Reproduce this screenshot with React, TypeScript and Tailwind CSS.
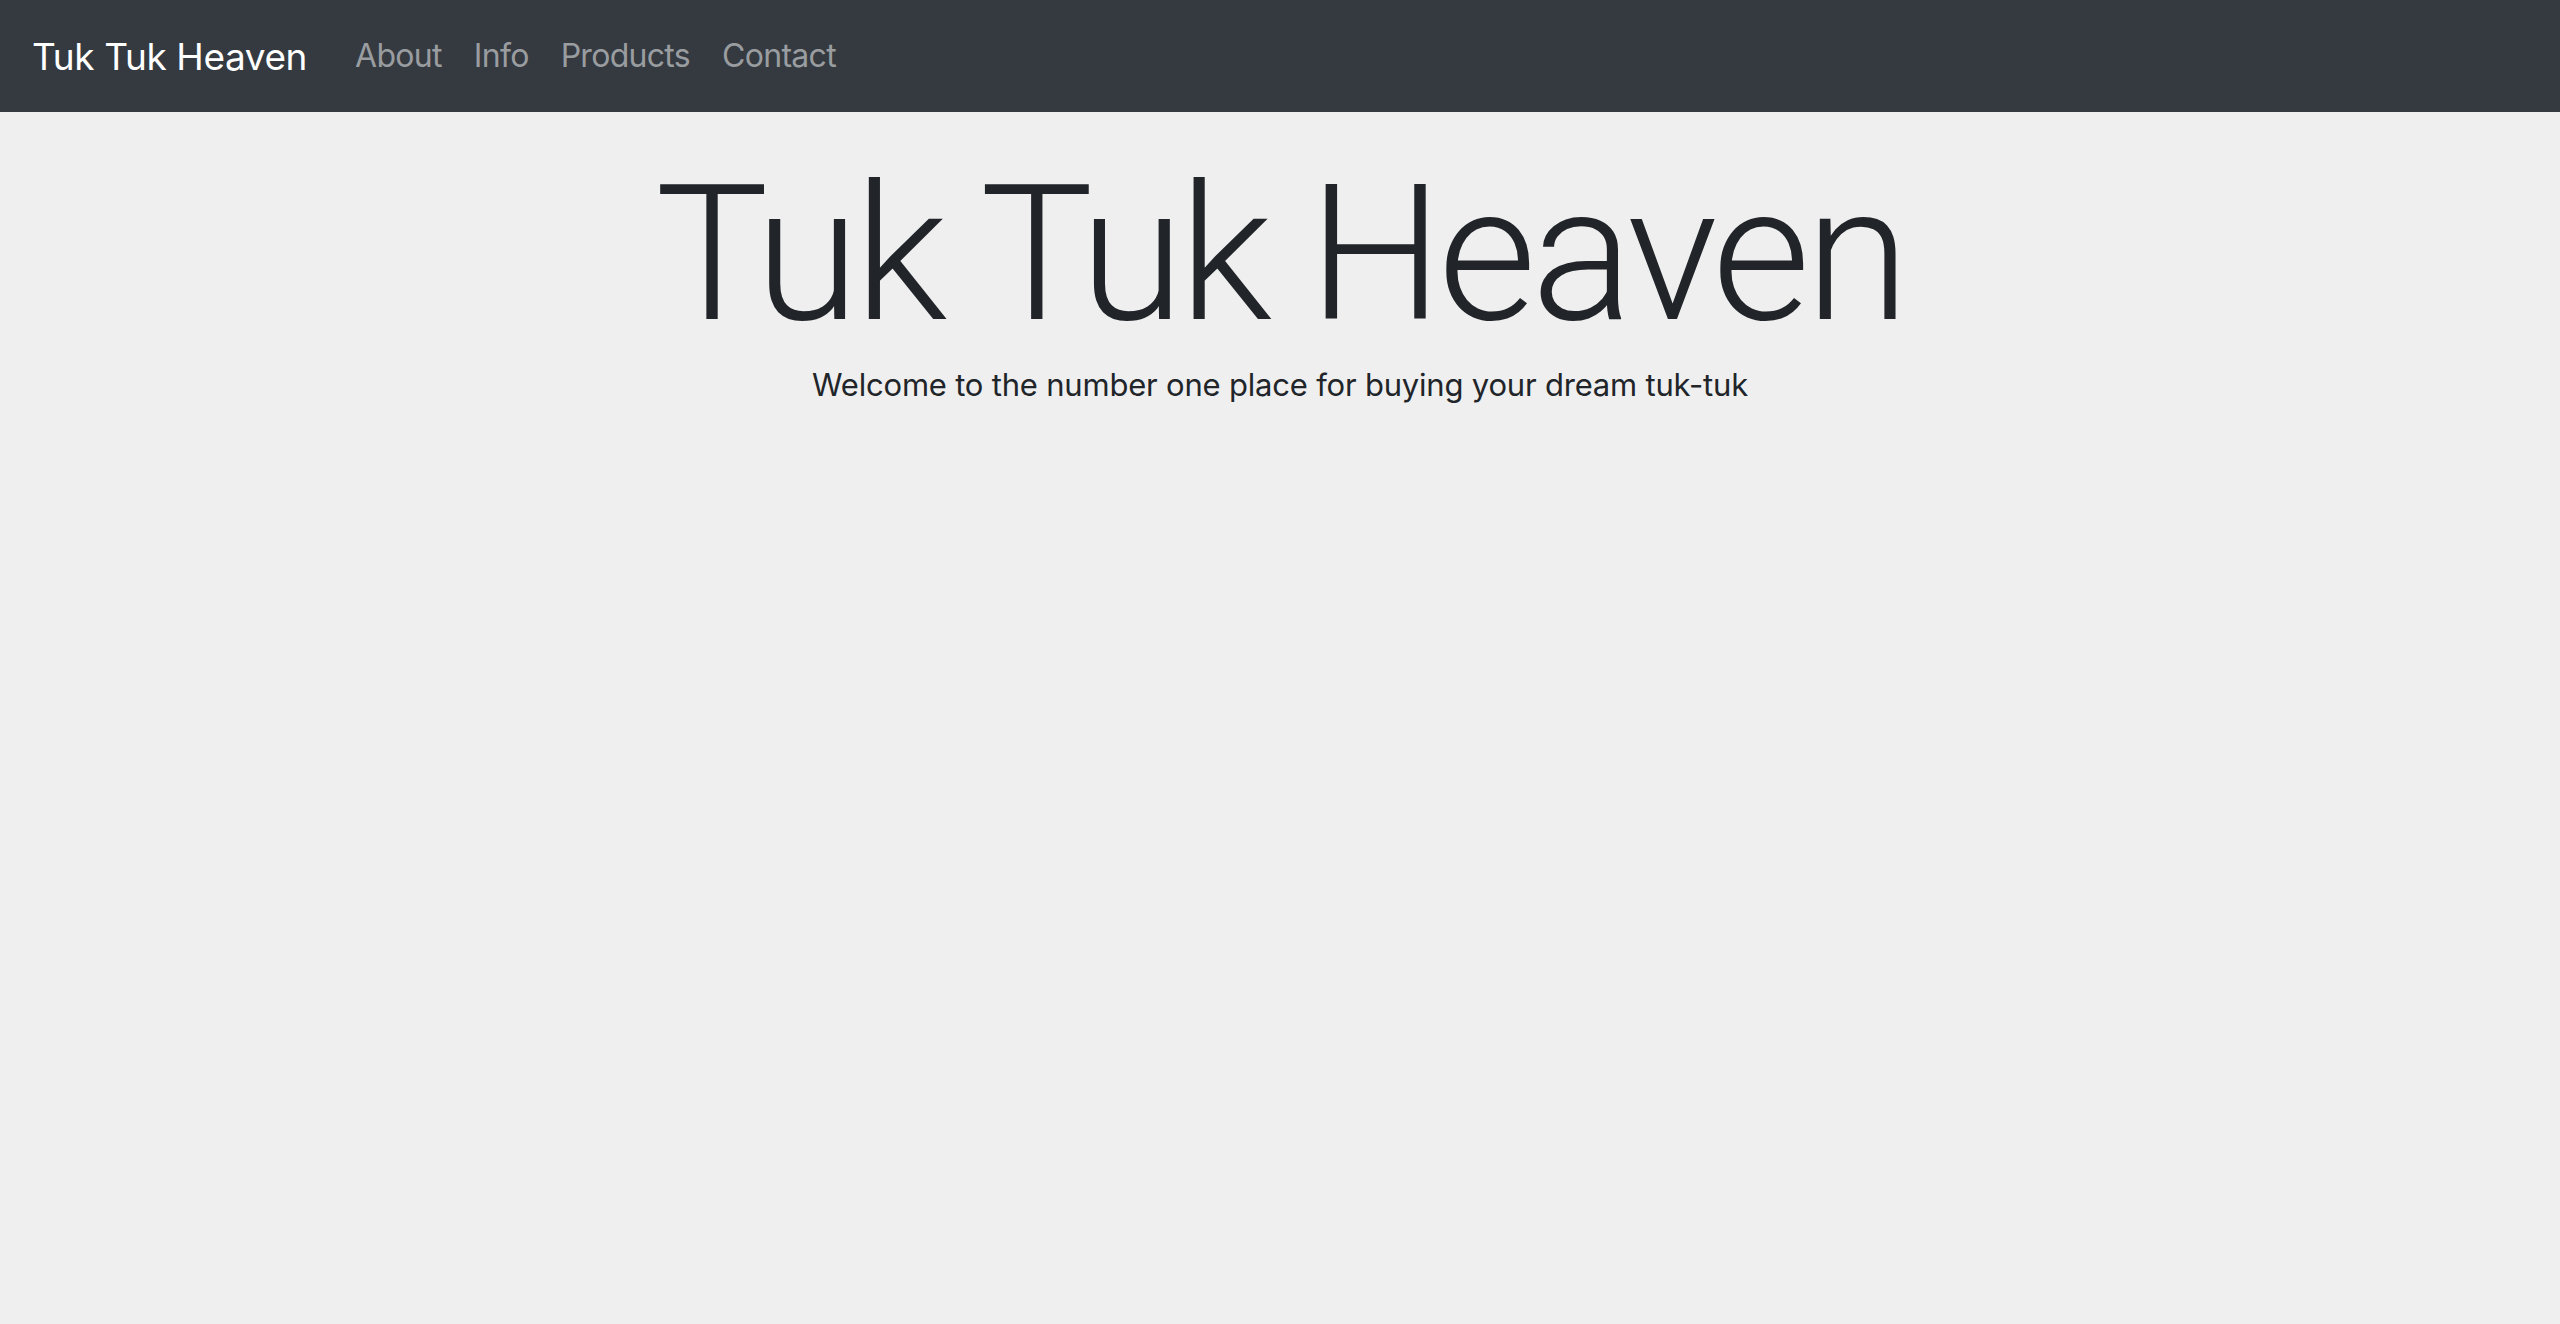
export default function App() {
  return (
    <div className="min-h-[1324px] bg-[#efefef] text-[#212529]" style={{ fontFamily: "Inter, 'Liberation Sans', sans-serif" }}>
      {/* Navbar */}
      <nav className="flex h-[112px] items-center bg-[#343a40] px-[32px]">
        <a className="mr-[48px] text-[37px] leading-none tracking-[-0.4px] text-white">Tuk Tuk Heaven</a>
        <ul className="flex items-center gap-[32px] text-[32px] leading-none tracking-[-0.7px] text-[#9a9da0]">
          <li>About</li>
          <li>Info</li>
          <li>Products</li>
          <li>Contact</li>
        </ul>
      </nav>

      {/* Jumbotron */}
      <div className="flex flex-col items-center pt-[28px]">
        <h1 className="font-['Roboto',sans-serif] text-[190px] font-light leading-[1.2] tracking-[-5px]">Tuk Tuk Heaven</h1>
        <p className="mt-[-6px] text-[31px] leading-[1.5] tracking-[-0.2px]">Welcome to the number one place for buying your dream tuk-tuk</p>
      </div>
    </div>
  );
}
